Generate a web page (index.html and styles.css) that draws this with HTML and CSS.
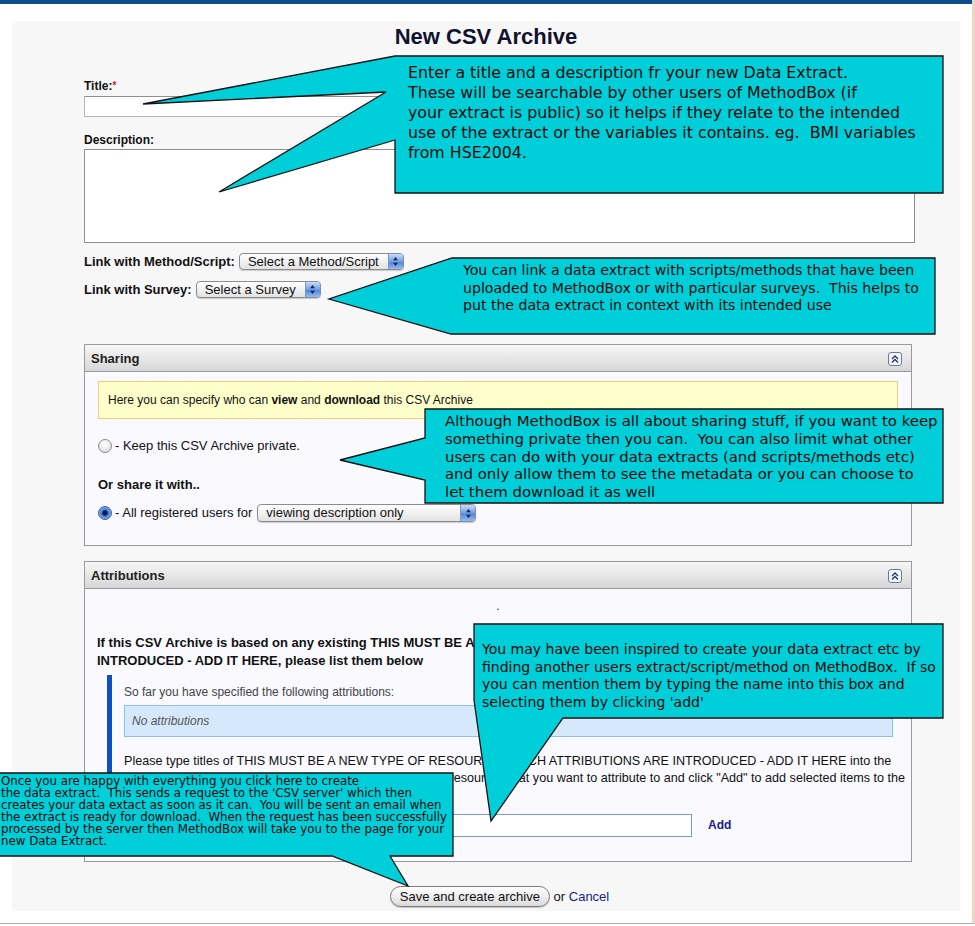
FILE: index.html
```html
<!DOCTYPE html>
<html>
<head>
<meta charset="utf-8">
<title>New CSV Archive</title>
<link rel="stylesheet" href="styles.css">
</head>
<body>
<div class="frame">
  <div class="topbar"></div>
  <main class="panel">
    <h1>New CSV Archive</h1>
    <form class="form">
      <label class="lbl lbl-title">Title:<span class="req">*</span></label>
      <input class="text-input" type="text">
      <label class="lbl lbl-desc">Description:</label>
      <textarea class="area"></textarea>

      <div class="linkrow row-method">
        <span class="lbl-inline">Link with Method/Script:</span>
        <span class="sel sel-method"><span class="sel-text">Select a Method/Script</span><span class="sel-arrow"><svg width="7" height="11" viewBox="0 0 7 11"><path d="M3.5 1 L6 4.2 H1 Z M3.5 10 L6 6.8 H1 Z" fill="#1b2746"/></svg></span></span>
      </div>
      <div class="linkrow row-survey">
        <span class="lbl-inline">Link with Survey:</span>
        <span class="sel sel-survey"><span class="sel-text">Select a Survey</span><span class="sel-arrow"><svg width="7" height="11" viewBox="0 0 7 11"><path d="M3.5 1 L6 4.2 H1 Z M3.5 10 L6 6.8 H1 Z" fill="#1b2746"/></svg></span></span>
      </div>

      <section class="box box-sharing">
        <div class="box-head"><span>Sharing</span><svg class="fold" width="14" height="14" viewBox="0 0 14 14"><rect x="0.5" y="0.5" width="13" height="13" rx="2.5" fill="#f4f6fb" stroke="#6a76a6"/><path d="M4 7 L7 4 L10 7 M4 10.5 L7 7.5 L10 10.5" fill="none" stroke="#27336a" stroke-width="1.3"/></svg></div>
        <div class="box-body sharing-body">
          <div class="notice">Here you can specify who can <b>view</b> and <b>download</b> this CSV Archive</div>
          <div class="radio-row row-private"><span class="radio"></span><span class="radio-label">- Keep this CSV Archive private.</span></div>
          <div class="share-title">Or share it with..</div>
          <div class="radio-row row-all"><span class="radio radio-on"></span><span class="radio-label">- All registered users for</span><span class="sel sel-share"><span class="sel-text">viewing description only</span><span class="sel-arrow"><svg width="7" height="11" viewBox="0 0 7 11"><path d="M3.5 1 L6 4.2 H1 Z M3.5 10 L6 6.8 H1 Z" fill="#1b2746"/></svg></span></span></div>
        </div>
      </section>

      <section class="box box-attr">
        <div class="box-head"><span>Attributions</span><svg class="fold" width="14" height="14" viewBox="0 0 14 14"><rect x="0.5" y="0.5" width="13" height="13" rx="2.5" fill="#f4f6fb" stroke="#6a76a6"/><path d="M4 7 L7 4 L10 7 M4 10.5 L7 7.5 L10 10.5" fill="none" stroke="#27336a" stroke-width="1.3"/></svg></div>
        <div class="box-body attr-body">
          <div class="dot">.</div>
          <p class="attr-intro">If this CSV Archive is based on any existing THIS MUST BE A NEW TYPE OF RESOURCE WHICH ATTRIBUTIONS ARE<br>INTRODUCED - ADD IT HERE, please list them below</p>
          <div class="attr-block">
            <div class="attr-sofar">So far you have specified the following attributions:</div>
            <div class="attr-list">No attributions</div>
            <p class="attr-help">Please type titles of THIS MUST BE A NEW TYPE OF RESOURCE WHICH ATTRIBUTIONS ARE INTRODUCED - ADD IT HERE into the<br>text box below, wait for the suggestions, and then pick the resources that you want to attribute to and click "Add" to add selected items to the<br>list.</p>
            <div class="attr-add"><input class="attr-input" type="text"><a class="add-link" href="#">Add</a></div>
          </div>
        </div>
      </section>

      <div class="actions"><button type="button" class="btn">Save and create archive</button> or <a class="cancel" href="#">Cancel</a></div>
    </form>
  </main>

  <svg class="callouts" width="975" height="926" viewBox="0 0 975 926">
    <g fill="#00cfd9" stroke="#111" stroke-width="1.3" stroke-linejoin="miter">
      <path d="M395 56 L943 56 L943 193 L395 193 L395 140 L219 192 L386 92 L143 104 Z"/>
      <path d="M452 258 L935 258 L935 334 L451 334 L329 299 Z"/>
      <path d="M425 409 L943 409 L943 503 L425 503 L425 480 L340 460 L425 438 Z"/>
      <path d="M474 624 L943 624 L943 718 L563 718 L491 821 L474 700 Z"/>
      <path d="M-2 773 L453 773 L453 856 L390 856 L408 886 L332 856 L-2 856 Z"/>
    </g>
  </svg>
  <div class="note note-1">Enter a title and a description fr your new Data Extract.
These will be searchable by other users of MethodBox (if
your extract is public) so it helps if they relate to the intended
use of the extract or the variables it contains. eg.  BMI variables
from HSE2004.</div>
  <div class="note note-2">You can link a data extract with scripts/methods that have been
uploaded to MethodBox or with particular surveys.  This helps to
put the data extract in context with its intended use</div>
  <div class="note note-3">Although MethodBox is all about sharing stuff, if you want to keep
something private then you can.  You can also limit what other
users can do with your data extracts (and scripts/methods etc)
and only allow them to see the metadata or you can choose to
let them download it as well</div>
  <div class="note note-4">You may have been inspired to create your data extract etc by
finding another users extract/script/method on MethodBox.  If so
you can mention them by typing the name into this box and
selecting them by clicking 'add'</div>
  <div class="note note-5">Once you are happy with everything you click here to create
the data extract.  This sends a request to the 'CSV server' which then
creates your data extact as soon as it can.  You will be sent an email when
the extract is ready for download.  When the request has been successfully
processed by the server then MethodBox will take you to the page for your
new Data Extract.</div>
</div>
</body>
</html>
```

FILE: styles.css
```css
* { box-sizing: border-box; }
html, body { margin: 0; padding: 0; }
body {
  background: #fff;
  font-family: "Liberation Sans", Arial, sans-serif;
  font-size: 12px;
  color: #111;
}
.frame {
  position: relative;
  width: 975px;
  height: 924px;
  border-right: 3px solid #ecd7c5;
  border-bottom: 1px solid #a9a9a9;
  overflow: hidden;
}
.topbar { height: 4px; background: #0b4c8c; }
.panel {
  margin: 17px 12px 0;
  background: #f7f7f7;
  padding: 3px 0 4px;
}
h1 {
  margin: 0;
  text-align: center;
  font-size: 22px;
  line-height: 26px;
  font-weight: bold;
  color: #10122e;
}
.form {
  margin-left: 72px;
  width: 831px;
  display: flex;
  flex-direction: column;
  align-items: flex-start;
}
.lbl {
  display: block;
  font-weight: bold;
  font-size: 12px;
  line-height: 16px;
}
.lbl-title { margin-top: 28px; }
.lbl-desc { margin-top: 15px; }
.req { color: #e01010; font-size: 10px; vertical-align: top; }
.text-input {
  margin-top: 2px;
  width: 831px;
  height: 21px;
  border: 1px solid #b5b5b5;
  border-top-color: #8f8f8f;
  background: #fff;
}
.area {
  margin-top: 1px;
  width: 831px;
  height: 94px;
  border: 1px solid #8f8f8f;
  background: #fff;
  resize: none;
}
.linkrow {
  display: flex;
  align-items: center;
  gap: 4px;
  height: 17px;
  font-weight: bold;
  font-size: 13px;
}
.row-method { margin-top: 10px; }
.row-survey { margin-top: 11px; }
.lbl-inline { white-space: nowrap; }

.sel {
  display: inline-flex;
  align-items: stretch;
  height: 17px;
  border: 1px solid #8c8c8c;
  border-radius: 4px;
  background: linear-gradient(#ffffff, #f1f1f1 50%, #e2e2e2);
  box-shadow: 0 1px 1px rgba(0,0,0,0.18);
  font-weight: normal;
  font-size: 13px;
  overflow: hidden;
}
.sel-text { flex: 1; padding-left: 8px; line-height: 15px; white-space: nowrap; color: #111; }
.sel-arrow {
  width: 15px;
  display: flex;
  align-items: center;
  justify-content: center;
  border-left: 1px solid #7f96c0;
  background: linear-gradient(#c7dcf8, #6fa0e8 50%, #4f88e0 55%, #93bdf2);
}
.sel-method { width: 165px; }
.sel-survey { width: 125px; }
.sel-share { width: 219px; margin-left: 5px; height: 18px; font-size: 13px; }
.sel-share .sel-text { line-height: 16px; }

.box { width: 828px; }
.box-sharing { margin-top: 46px; }
.box-attr { margin-top: 15px; }
.box-head {
  height: 28px;
  border: 1px solid #9a9a9a;
  background: linear-gradient(#f6f6f6, #e4e4e4 60%, #d6d6d6);
  display: flex;
  align-items: center;
  justify-content: space-between;
  padding: 0 9px 0 6px;
  font-weight: bold;
  font-size: 13px;
  color: #222;
}
.fold { display: block; margin-top: 1px; }
.box-body {
  border: 1px solid #9a9a9a;
  border-top: none;
  background: #f9f9fe;
}
.sharing-body { padding: 9px 13px 23px 13px; }
.notice {
  height: 38px;
  border: 1px solid #efcf7c;
  background: #ffffcc;
  padding: 0 9px;
  line-height: 36px;
  font-size: 12px;
}
.radio-row {
  display: flex;
  align-items: center;
  font-size: 13px;
  line-height: 16px;
}
.radio-label { white-space: pre; }
.row-private { margin-top: 19px; height: 16px; }
.row-all { margin-top: 11px; height: 18px; }
.radio {
  width: 14px;
  height: 14px;
  border-radius: 50%;
  border: 1px solid #8a8a8a;
  background: radial-gradient(circle at 50% 35%, #ffffff, #e4e4e4 70%, #cfcfcf);
  margin-right: 3px;
  flex: none;
}
.radio-on {
  border-color: #43608f;
  background: radial-gradient(circle, #0e1d40 0, #0e1d40 2.3px, #3c78d8 3px, #8ab6f0 80%);
}
.share-title {
  margin-top: 23px;
  font-weight: bold;
  font-size: 13px;
  line-height: 16px;
}
.attr-body { padding: 9px 12px 24px 12px; }
.dot { text-align: center; line-height: 16px; font-size: 12px; }
.attr-intro {
  margin: 20px 0 0;
  font-weight: bold;
  font-size: 13px;
  line-height: 18px;
  white-space: nowrap;
}
.attr-block {
  margin: 5px 6px 0 10px;
  border-left: 5px solid #0d52c2;
  padding: 9px 0 0 12px;
}
.attr-sofar { color: #444; font-size: 12px; line-height: 16px; }
.attr-list {
  margin-top: 5px;
  height: 32px;
  border: 1px solid #8cbff0;
  background: #d5e8fc;
  padding-left: 7px;
  line-height: 30px;
  font-style: italic;
  color: #555;
  font-size: 12px;
}
.attr-help {
  margin: 15.5px 0 0;
  font-size: 12.6px;
  line-height: 17px;
  white-space: nowrap;
}
.attr-add {
  margin-top: 10px;
  display: flex;
  align-items: center;
}
.attr-input {
  width: 568px;
  height: 23px;
  border: 1px solid #7f9cc6;
  background: #fff;
}
.add-link {
  margin-left: 16px;
  color: #1b1b8a;
  font-weight: bold;
  font-size: 12px;
  text-decoration: none;
}
.actions {
  align-self: stretch;
  margin-top: 24px;
  text-align: center;
  font-size: 13px;
  line-height: 21px;
}
.btn {
  height: 21px;
  padding: 0 9px;
  border: 1px solid #7a7a7a;
  border-radius: 11px;
  background: linear-gradient(#ffffff, #eeeeee 50%, #dadada);
  font-family: "Liberation Sans", Arial, sans-serif;
  font-size: 13px;
  color: #111;
  box-shadow: 0 1px 1px rgba(0,0,0,0.2);
  vertical-align: top;
}
.cancel { color: #1b1b8a; text-decoration: none; }

.callouts { position: absolute; left: 0; top: 0; pointer-events: none; }
.note {
  position: absolute;
  font-family: "DejaVu Sans", sans-serif;
  color: #0a0a0a;
  white-space: pre;
}
.note-1 { left: 408px; top: 63px; font-size: 15.8px; line-height: 20px; }
.note-2 { left: 463px; top: 262px; font-size: 14.1px; line-height: 17.5px; }
.note-3 { left: 445px; top: 413px; font-size: 14.9px; line-height: 17.8px; }
.note-4 { left: 482px; top: 641px; font-size: 14px; line-height: 17.6px; }
.note-5 { left: 1px; top: 775px; font-size: 11.8px; line-height: 12px; }
```
